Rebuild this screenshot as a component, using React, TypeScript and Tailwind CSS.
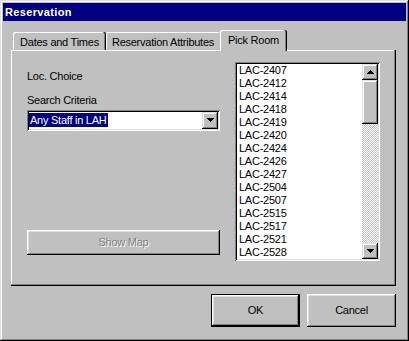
import React from "react";

const rooms = [
  "LAC-2407",
  "LAC-2412",
  "LAC-2414",
  "LAC-2418",
  "LAC-2419",
  "LAC-2420",
  "LAC-2424",
  "LAC-2426",
  "LAC-2427",
  "LAC-2504",
  "LAC-2507",
  "LAC-2515",
  "LAC-2517",
  "LAC-2521",
  "LAC-2528",
];

function Down() {
  return (
    <svg width="7" height="4" shapeRendering="crispEdges" className="block">
      <rect x="0" y="0" width="7" height="1" fill="#000" />
      <rect x="1" y="1" width="5" height="1" fill="#000" />
      <rect x="2" y="2" width="3" height="1" fill="#000" />
      <rect x="3" y="3" width="1" height="1" fill="#000" />
    </svg>
  );
}

function Up() {
  return (
    <svg width="7" height="4" shapeRendering="crispEdges" className="block">
      <rect x="3" y="0" width="1" height="1" fill="#000" />
      <rect x="2" y="1" width="3" height="1" fill="#000" />
      <rect x="1" y="2" width="5" height="1" fill="#000" />
      <rect x="0" y="3" width="7" height="1" fill="#000" />
    </svg>
  );
}

export default function App() {
  return (
    <div className="w-[409px] h-[341px] bg-[#c0c0c0] p-[3px] flex flex-col font-['Liberation_Sans',Arial,sans-serif] text-[11px] leading-[13px] text-black tracking-[-0.25px] shadow-[inset_-1px_-1px_0_#000,inset_1px_1px_0_#dfdfdf,inset_-2px_-2px_0_#808080,inset_2px_2px_0_#fff]">
      {/* Title bar */}
      <div className="h-[18px] shrink-0 bg-[#000080] text-white font-bold pl-[2px] pt-[3px] tracking-[0.35px]">
        Reservation
      </div>

      {/* Tabs */}
      <div className="mt-[9px] ml-[10px] h-[20px] shrink-0 flex items-end">
        <div className="w-[93px] h-[18px] pt-[4px] text-center rounded-tl-[2px] rounded-tr-[2px] shadow-[inset_-1px_0_0_#000,inset_-2px_0_0_#808080,inset_1px_1px_0_#fff]">
          Dates and Times
        </div>
        <div className="w-[114px] h-[18px] pt-[4px] text-center rounded-tl-[2px] rounded-tr-[2px] shadow-[inset_1px_1px_0_#fff]">
          Reservation Attributes
        </div>
        <div className="relative z-10 w-[67px] h-[21px] mb-[-1px] pt-[4px] text-center bg-[#c0c0c0] rounded-tl-[2px] rounded-tr-[2px] shadow-[inset_-1px_0_0_#000,inset_-2px_0_0_#808080,inset_1px_1px_0_#fff]">
          Pick Room
        </div>
      </div>

      {/* Panel */}
      <div className="ml-[8px] w-[385px] h-[236px] shrink-0 flex pt-[12px] pl-[16px] shadow-[inset_-1px_-1px_0_#000,inset_-2px_-2px_0_#808080,inset_1px_1px_0_#fff]">
        <div className="w-[193px] pt-[8px] flex flex-col">
          <div className="h-[13px]">Loc. Choice</div>
          <div className="mt-[11px] h-[13px]">Search Criteria</div>
          <div className="mt-[3px] h-[21px] p-[2px] flex shadow-[inset_1px_1px_0_#808080,inset_-1px_-1px_0_#fff,inset_2px_2px_0_#000,inset_-2px_-2px_0_#dfdfdf]">
            <div className="flex-1 bg-white pt-[1px]">
              <span className="inline-block h-[14px] leading-[14px] px-[1px] bg-[#000080] text-white">
                Any Staff in LAH
              </span>
            </div>
            <div className="w-[16px] h-[17px] bg-[#c0c0c0] flex items-center justify-center pb-[1px] shadow-[inset_-1px_-1px_0_#000,inset_1px_1px_0_#dfdfdf,inset_-2px_-2px_0_#808080,inset_2px_2px_0_#fff]">
              <Down />
            </div>
          </div>
          <div className="mt-[99px] h-[25px] flex items-center justify-center text-[#808080] [text-shadow:1px_1px_0_#fff] shadow-[inset_-1px_-1px_0_#000,inset_1px_1px_0_#fff,inset_-2px_-2px_0_#808080,inset_2px_2px_0_#dfdfdf]">
            Show Map
          </div>
        </div>

        {/* List box */}
        <div className="ml-[15px] w-[145px] h-[199px] p-[2px] flex shadow-[inset_1px_1px_0_#808080,inset_-1px_-1px_0_#fff,inset_2px_2px_0_#000,inset_-2px_-2px_0_#dfdfdf]">
          <div className="flex-1 bg-white pl-[2px] overflow-hidden">
            {rooms.map((r) => (
              <div key={r} className="h-[13px]">
                {r}
              </div>
            ))}
          </div>
          <div className="w-[16px] flex flex-col">
            <div className="h-[16px] bg-[#c0c0c0] flex items-center justify-center shadow-[inset_-1px_-1px_0_#000,inset_1px_1px_0_#dfdfdf,inset_-2px_-2px_0_#808080,inset_2px_2px_0_#fff]">
              <Up />
            </div>
            <div className="h-[44px] bg-[#c0c0c0] shadow-[inset_-1px_-1px_0_#000,inset_1px_1px_0_#dfdfdf,inset_-2px_-2px_0_#808080,inset_2px_2px_0_#fff]" />
            <div className="flex-1 [background-image:repeating-conic-gradient(#c0c0c0_0%_25%,#ffffff_0%_50%)] [background-size:2px_2px]" />
            <div className="h-[16px] bg-[#c0c0c0] flex items-center justify-center shadow-[inset_-1px_-1px_0_#000,inset_1px_1px_0_#dfdfdf,inset_-2px_-2px_0_#808080,inset_2px_2px_0_#fff]">
              <Down />
            </div>
          </div>
        </div>
      </div>

      {/* Buttons */}
      <div className="mt-[8px] pr-[10px] flex justify-end gap-[7px]">
        <div className="w-[89px] h-[33px] border border-black flex items-center justify-center shadow-[inset_-1px_-1px_0_#000,inset_1px_1px_0_#fff,inset_-2px_-2px_0_#808080,inset_2px_2px_0_#dfdfdf]">
          OK
        </div>
        <div className="w-[89px] h-[33px] flex items-center justify-center shadow-[inset_-1px_-1px_0_#000,inset_1px_1px_0_#fff,inset_-2px_-2px_0_#808080,inset_2px_2px_0_#dfdfdf]">
          Cancel
        </div>
      </div>
    </div>
  );
}
